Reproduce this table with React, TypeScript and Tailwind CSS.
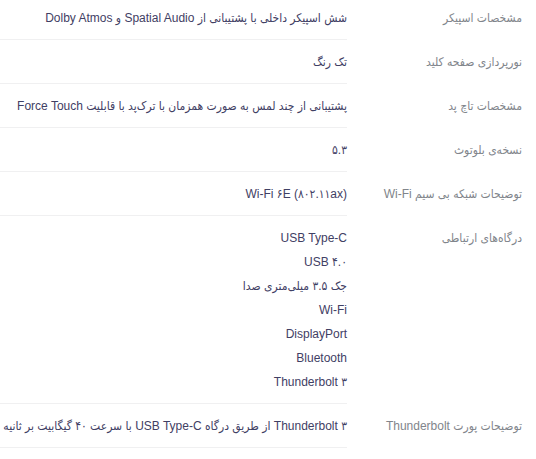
const specs: { label: string; values: string[] }[] = [
  { label: "مشخصات اسپیکر", values: ["شش اسپیکر داخلی با پشتیبانی از Spatial Audio و Dolby Atmos"] },
  { label: "نورپردازی صفحه کلید", values: ["تک رنگ"] },
  { label: "مشخصات تاچ پد", values: ["پشتیبانی از چند لمس به صورت همزمان با ترک‌پد با قابلیت Force Touch"] },
  { label: "نسخه‌ی بلوتوث", values: ["۵.۳"] },
  { label: "توضیحات شبکه بی سیم Wi-Fi", values: ["Wi-Fi ۶E (۸۰۲.۱۱ax)"] },
  {
    label: "درگاه‌های ارتباطی",
    values: [
      "USB Type-C",
      "USB ۴.۰",
      "جک ۳.۵ میلی‌متری صدا",
      "Wi-Fi",
      "DisplayPort",
      "Bluetooth",
      "Thunderbolt ۳",
    ],
  },
  { label: "توضیحات پورت Thunderbolt", values: ["Thunderbolt ۳ از طریق درگاه USB Type-C با سرعت ۴۰ گیگابیت بر ثانیه"] },
];

export default function App() {
  return (
    <div
      dir="rtl"
      className="w-[536px] h-[459px] overflow-hidden bg-white font-['Liberation_Sans','DejaVu_Sans_Condensed','DejaVu_Sans',sans-serif] text-[12px]"
    >
      <div className="-mt-[4px] pr-[14px]">
        {specs.map((row) => (
          <div key={row.label} className="flex">
            <div className="w-[175px] shrink-0 pt-[10px] leading-[24px] text-[#81858b]">
              {row.label}
            </div>
            <div className="flex-1 border-b border-[#f0f0f1] pt-[10px] pb-[9px] text-[#3f4064]">
              {row.values.map((v) => (
                <p key={v} className="leading-[24px] whitespace-nowrap">
                  {v}
                </p>
              ))}
            </div>
          </div>
        ))}
      </div>
    </div>
  );
}
